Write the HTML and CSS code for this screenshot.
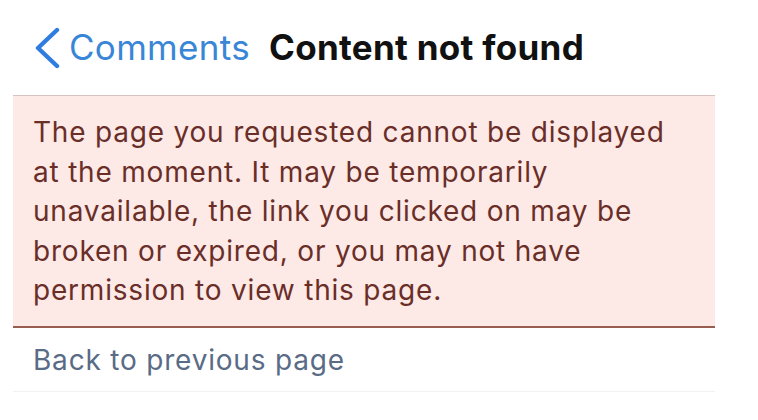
FILE: index.html
```html
<!DOCTYPE html>
<html>
<head>
<meta charset="utf-8">
<link rel="stylesheet" href="styles.css">
</head>
<body>
<div class="page">
  <header class="nav">
    <a class="back">
      <svg class="chev" width="28" height="42" viewBox="0 0 28 42"><path d="M24 3 L5 21 L24 39" fill="none" stroke="#2f7de0" stroke-width="4.4" stroke-linecap="round" stroke-linejoin="round"/></svg>
      <span class="back-label">Comments</span>
    </a>
    <h1 class="title">Content not found</h1>
  </header>
  <div class="alert">
    <p>The page you requested cannot be displayed<br>at the moment. It may be temporarily<br>unavailable, the link you clicked on may be<br>broken or expired, or you may not have<br>permission to view this page.</p>
  </div>
  <div class="footer-link">
    <a>Back to previous page</a>
  </div>
</div>
</body>
</html>
```
FILE: styles.css
```css
html, body { margin: 0; padding: 0; background: #fff; }
body { font-family: Inter, "Noto Sans", sans-serif; width: 758px; height: 420px; overflow: hidden; }
.page { padding: 0 43px 0 13px; }
.nav { display: flex; align-items: center; height: 95px; padding-left: 20px; padding-bottom: 2px; box-sizing: border-box; }
.back { display: flex; align-items: center; color: #3a86d6; }
.chev { margin-right: 8px; margin-top: 2px; }
.back-label { font-size: 35px; letter-spacing: 0.3px; }
.title { margin: 0 0 0 19px; font-size: 35px; font-weight: 700; color: #111; letter-spacing: 0.3px; }
.alert { background: #fde9e6; border-top: 1px solid #d9c3c2; border-bottom: 2px solid #9a5d52; padding: 17px 20px 15px 20px; }
.alert p { margin: 0; font-size: 28px; line-height: 39.5px; color: #6a2e28; letter-spacing: 0.8px; white-space: nowrap; }
.footer-link { padding: 14px 20px 13px 20px; border-bottom: 1px solid #f2f2f2; }
.footer-link a { font-size: 28px; color: #5a6b86; line-height: 36px; letter-spacing: 0.8px; }
```
